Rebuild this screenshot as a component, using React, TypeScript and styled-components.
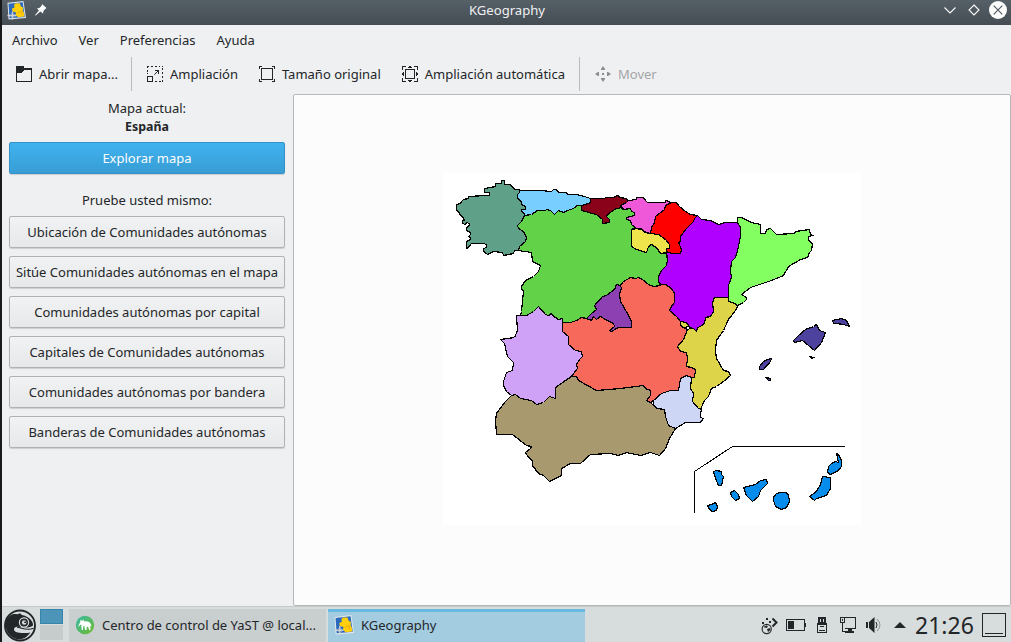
import React from "react";
import styled, { createGlobalStyle } from "styled-components";

const Global = createGlobalStyle`
  * { box-sizing: border-box; }
  body { margin: 0; background: #eff0f1; overflow: hidden; }
  #root { font-family: "Noto Sans", sans-serif; font-size: 13px; line-height: 18px; color: #232629; }
`;

const Desktop = styled.div`
  width: 1011px;
  height: 642px;
  display: flex;
  flex-direction: column;
  border-left: 2px solid #17191c;
  background: #eff0f1;
`;

const TitleBar = styled.header`
  height: 25px;
  display: grid;
  grid-template-columns: 80px 1fr 80px;
  align-items: center;
  background: linear-gradient(#566067, #454c54);
  color: #eff0f1;
`;

const TitleIcons = styled.div`
  display: flex;
  align-items: center;
  padding-left: 5px;
  gap: 9px;
  height: 25px;
  padding-bottom: 5px;
`;

const Title = styled.div`
  text-align: center;
  height: 25px;
  line-height: 21px;
  padding-left: 1px;
  font-size: 13.1px;
`;

const WindowButtons = styled.div`
  display: flex;
  justify-content: flex-end;
  gap: 6px;
  padding: 0 4px 5px 0;
  height: 25px;
  align-items: center;
`;

const MenuBar = styled.nav`
  height: 32px;
  display: flex;
  align-items: center;
  gap: 21px;
  padding: 0 0 2px 10px;
`;

const ToolBar = styled.div`
  height: 34px;
  display: flex;
  align-items: center;
  padding-left: 14px;
`;

const Tool = styled.div<{ $after: number; $disabled?: boolean }>`
  display: flex;
  align-items: center;
  gap: 7px;
  white-space: nowrap;
  margin-right: ${(p) => p.$after}px;
  color: ${(p) => (p.$disabled ? "#a3a5a7" : "#232629")};
  svg { display: block; }
`;

const Divider = styled.span<{ $after: number }>`
  width: 1px;
  height: 34px;
  background: #b9bbbd;
  margin-right: ${(p) => p.$after}px;
`;

const Body = styled.main`
  height: 515px;
  padding-top: 3px;
  display: flex;
`;

const Sidebar = styled.aside`
  width: 291px;
  padding: 5px 8px 0 7px;
  display: flex;
  flex-direction: column;
`;

const Label = styled.div<{ $bold?: boolean }>`
  text-align: center;
  height: 18px;
  line-height: ${(p) => (p.$bold ? "20px" : "18px")};
  font-weight: ${(p) => (p.$bold ? 700 : 400)};
  font-size: ${(p) => (p.$bold ? "12.4px" : "inherit")};
`;

const ButtonStack = styled.div<{ $top: number }>`
  display: flex;
  flex-direction: column;
  gap: 8px;
  margin-top: ${(p) => p.$top}px;
`;

const PushButton = styled.button<{ $primary?: boolean }>`
  height: 32px;
  padding: 0;
  border: 1px solid ${(p) => (p.$primary ? "#3391c7" : "#b0b2b4")};
  border-radius: 2px;
  background: ${(p) => (p.$primary ? "linear-gradient(#40b2f0, #389dd4)" : "linear-gradient(#f1f2f3, #e7e8e9)")};
  box-shadow: 0 1px 1px rgba(0, 0, 0, 0.14);
  color: ${(p) => (p.$primary ? "#fcfcfc" : "#232629")};
  font: inherit;
  line-height: 28px;
  white-space: nowrap;
`;

const MapFrame = styled.section`
  width: 718px;
  height: 512px;
  border: 1px solid #b6b8ba;
  border-radius: 2px;
  background: #fcfcfc;
  padding: 78px 0 0 149px;
  svg { display: block; }
`;

const Panel = styled.footer`
  height: 36px;
  border-top: 1px solid #c6cac9;
  background: #d7dcdd;
  display: flex;
  padding-top: 2px;
`;

const Launcher = styled.div`
  width: 36px;
  padding: 0 0 0 2px;
  svg { display: block; }
`;

const Pager = styled.div`
  width: 23px;
  margin: 0 6px 0 2px;
  display: flex;
  flex-direction: column;
  gap: 1px;
`;

const PagerCell = styled.span<{ $active?: boolean }>`
  height: 15px;
  background: ${(p) => (p.$active ? "#4d94b9" : "#c6cccc")};
  border: ${(p) => (p.$active ? "1px solid #3584ac" : "0")};
`;

const Task = styled.div<{ $active?: boolean }>`
  width: 257px;
  height: 33px;
  margin-right: 2px;
  padding: 0 0 1px 6px;
  display: flex;
  align-items: center;
  gap: 7px;
  white-space: nowrap;
  background: ${(p) => (p.$active ? "#a3cce1" : "#c9cecf")};
  box-shadow: inset 0 ${(p) => (p.$active ? "3px #68b9e2" : "0 transparent")};
  svg { flex: none; }
`;

const Tray = styled.div`
  margin-left: auto;
  display: flex;
  align-items: center;
  gap: 6px;
  padding-right: 5px;
  height: 32px;
`;

const Clock = styled.span`
  font-size: 23px;
  line-height: 32px;
  width: 61px;
  margin-left: -1px;
  white-space: nowrap;
`;

type Area = { fill: string; points: string };

const areas: Area[] = [
  { fill: "#5fa088", points: "456,204 460,203 461,201 463,199 468,198 468,196 485,195 489,195 489,192 484,192 484,188 490,187 495,186 495,183 501,183 501,180 504,180 504,184 509,184 512,186 514,189 519,189 519,192 517,194 517,198 521,201 521,204 525,206 525,209 521,209 521,211 524,213 524,216 521,221 517,225 518,228 523,231 525,234 526,237 525,241 519,246 518,250 514,250 513,253 508,254 503,255 502,252 493,251 487,254 483,251 483,248 486,247 486,244 483,243 471,243 468,247 466,248 466,241 470,239 470,237 468,236 470,234 470,232 466,230 466,227 469,225 469,223 466,222 465,224 462,223 462,220 464,220 462,216 460,215 458,211 456,210" },
  { fill: "#78cfff", points: "519,189 520,190 540,190 551,191 553,189 556,189 558,192 566,192 567,194 576,194 584,196 590,198 590,202 585,204 581,205 577,205 573,208 567,210 563,212 558,210 554,214 550,210 546,209 545,210 537,210 531,214 524,215 524,213 521,211 521,209 525,209 525,206 521,204 521,201 517,198 517,194 519,192" },
  { fill: "#62d249", points: "524,215 531,214 537,210 545,210 546,209 550,210 554,214 558,210 563,212 567,210 573,208 577,205 581,205 581,210 596,214 602,219 602,223 609,222 609,219 606,216 608,213 616,208 620,207 623,209 630,208 631,211 634,212 634,215 626,217 626,219 630,220 631,224 635,227 631,229 631,246 636,249 646,252 648,246 651,244 657,248 659,252 666,253 667,260 666,265 661,270 658,276 658,281 660,285 653,286 648,284 642,279 638,277 635,278 630,277 623,281 620,285 616,284 614,289 606,295 602,296 594,305 596,309 591,313 586,318 581,317 576,320 570,322 562,322 562,318 558,319 552,315 551,313 548,315 545,314 538,306 533,311 526,315 520,315 521,311 523,291 521,288 521,286 525,280 533,276 538,271 540,265 532,261 531,252 518,250 519,246 525,241 526,237 523,231 518,228 517,225 521,221" },
  { fill: "#8a0219", points: "590,198 603,198 606,197 613,197 617,195 620,197 625,198 628,200 626,202 620,205 622,207 616,208 608,213 606,216 609,219 609,222 602,223 602,219 596,214 581,210 581,205 585,204 590,202" },
  { fill: "#ef58d9", points: "628,200 636,199 636,197 643,197 645,200 647,202 665,202 665,200 669,201 669,203 665,205 664,209 659,213 655,216 654,222 651,227 650,233 644,231 640,228 636,228 631,224 630,220 626,219 626,217 634,215 634,212 631,211 630,208 623,209 620,205 626,202" },
  { fill: "#efe44b", points: "631,229 636,228 641,229 644,232 658,234 665,239 669,244 669,248 666,248 666,252 661,253 659,252 657,248 651,244 648,246 646,252 636,249 631,246" },
  { fill: "#ff0000", points: "669,203 671,202 676,202 679,206 685,211 690,214 697,215 694,218 693,221 685,229 680,236 680,241 678,242 681,249 680,253 671,253 666,251 666,248 669,248 669,244 665,239 658,234 650,233 651,227 654,222 655,216 659,213 664,209 665,205" },
  { fill: "#b000ff", points: "697,215 701,219 710,220 718,224 725,222 737,222 740,227 740,236 737,250 735,257 731,261 730,271 731,277 728,285 728,297 714,297 712,302 713,311 710,316 705,317 704,323 700,326 697,327 696,331 693,328 689,327 686,322 680,321 676,316 669,310 671,306 674,302 674,293 671,288 665,284 661,284 658,281 658,276 661,270 666,265 667,260 666,251 671,253 680,253 681,249 678,242 680,241 680,236 685,229 693,221 694,218" },
  { fill: "#83ff62", points: "737,217 741,217 751,222 760,224 760,233 765,233 766,229 770,228 776,234 794,233 795,231 809,229 810,234 812,235 808,236 808,240 812,243 811,250 809,252 807,257 800,259 788,266 783,275 771,280 750,287 741,294 746,297 746,299 743,302 737,305 735,303 728,301 728,285 731,277 730,271 731,261 735,257 737,250 740,236 740,227 737,222" },
  { fill: "#ddd449", points: "728,297 728,301 735,303 737,306 735,310 728,319 723,330 718,337 716,340 715,350 716,358 723,370 728,371 730,375 723,381 716,386 711,388 708,396 704,400 700,409 698,408 692,401 693,393 690,388 691,377 694,377 695,369 691,367 686,366 687,358 686,352 680,351 677,346 683,339 687,329 690,328 693,328 696,331 697,327 700,326 704,323 705,317 710,316 713,311 712,302 714,297" },
  { fill: "#f7695a", points: "562,322 570,322 576,320 581,317 586,318 591,320 593,316 596,319 600,316 605,319 613,323 614,326 609,330 611,331 618,327 631,327 631,321 627,313 620,301 619,293 621,288 620,285 623,281 630,277 635,278 638,277 642,279 648,284 653,286 660,285 661,284 665,284 671,288 674,293 674,302 671,306 669,310 676,316 680,321 680,325 683,327 687,329 683,339 677,346 680,351 686,352 687,358 686,366 691,367 695,369 694,377 691,377 686,375 680,378 678,390 670,390 661,393 653,400 650,402 646,400 650,395 650,390 645,388 643,385 635,386 620,388 596,390 578,380 576,376 571,376 577,368 576,364 579,359 582,356 581,351 575,350 568,344 568,336 562,331" },
  { fill: "#ddd449", points: "680,321 686,322 689,326 683,327 680,325" },
  { fill: "#8d40b2", points: "620,285 616,284 614,289 606,295 602,296 594,305 596,309 591,313 586,318 591,320 593,316 596,319 600,316 605,319 613,323 614,326 609,330 611,331 618,327 631,327 631,321 627,313 620,301 619,293 621,288" },
  { fill: "#cfa2f8", points: "562,322 562,318 558,319 552,315 551,313 548,315 545,314 538,306 533,311 526,315 516,315 517,330 514,337 500,339 504,343 507,356 513,362 512,370 506,372 503,381 503,385 506,391 511,395 515,394 520,398 531,400 536,404 543,402 549,396 555,398 555,387 565,380 571,376 577,368 576,364 579,359 582,356 581,351 575,350 568,344 568,336 562,331" },
  { fill: "#a8996e", points: "571,376 576,376 578,380 596,390 620,388 635,386 643,385 645,388 650,390 650,395 646,400 650,402 653,405 657,408 664,409 665,416 668,425 675,428 669,438 665,448 659,455 650,452 640,455 626,452 618,455 610,453 590,454 580,463 570,463 561,468 561,475 555,478 549,481 543,475 538,473 532,465 532,460 528,457 525,452 530,448 531,446 526,445 512,434 496,434 495,420 496,413 505,401 511,395 515,394 520,398 531,400 536,404 543,402 549,396 555,398 555,387 565,380" },
  { fill: "#cdd6f4", points: "653,400 661,393 670,390 678,390 680,378 686,375 691,377 690,388 693,393 692,401 698,408 701,409 700,413 700,417 703,418 700,422 685,422 675,428 668,425 665,416 664,409 657,408 653,405" },
  { fill: "#4e429f", points: "793,340 798,335 805,329 813,326 816,324 819,330 825,332 821,342 814,350 808,345 802,340 794,342" },
  { fill: "#4e429f", points: "832,320 841,318 846,320 849,326 843,324 836,323 833,323" },
  { fill: "#4e429f", points: "771,358 770,361 763,369 759,369 759,366 763,361 767,359" },
  { fill: "#4e429f", points: "765,377 770,378 770,380 768,380" },
  { fill: "#000000", points: "809,356 813,357 811,358" },
  { fill: "#068dec", points: "713,471 716,470 721,471 721,474 723,476 721,485 718,485 715,478" },
  { fill: "#068dec", points: "707,505 711,504 715,502 717,506 716,510 712,511 709,509" },
  { fill: "#068dec", points: "730,492 734,490 738,494 739,498 735,500 731,496" },
  { fill: "#068dec", points: "743,487 751,485 755,484 760,480 766,479 767,483 760,490 758,496 752,501 746,495" },
  { fill: "#068dec", points: "773,500 773,497 776,493 780,492 786,492 788,495 789,501 786,507 781,509 775,506" },
  { fill: "#068dec", points: "822,476 830,477 830,488 826,495 816,498 814,500 809,496 816,491 820,484" },
  { fill: "#068dec", points: "827,472 828,466 831,463 835,461 838,462 836,453 838,454 841,460 841,466 838,470 830,474" },
];

const SpainMap = () => (
  <svg width="418" height="352" viewBox="443 173 418 352" shapeRendering="crispEdges">
    <rect x="443" y="173" width="418" height="352" fill="#fff" />
    <g transform="translate(.5 .5)" stroke="#000" strokeWidth="1.2">
      {areas.map((a, i) => (
        <polygon key={i} points={a.points} fill={a.fill} />
      ))}
      <path d="M694 512V471L732 446H844.5" fill="none" strokeWidth="1" />
    </g>
  </svg>
);

const AppIcon = ({ size }: { size: number }) => (
  <svg width={size} height={size} viewBox="0 0 19 19">
    <path d="M.5 1.8 16.5 0 19 17 1.5 18.5Z" fill="#dfe6ea" />
    <path d="M1.5 2.8 15.7 1.2 17.8 16 2.5 17.3Z" fill="#2a69bd" />
    <path d="M7 4 8.5 2.3 12.8 2.3 14 5.6 16 6.5 15.8 9.5 17 12 17.4 15.6 11 16.3 8.5 14 9 11.5 5.5 10.5 5 7.5 7.5 6.5Z" fill="#ffce0c" />
    <path d="M10.5 12 14.5 10 15 13.5" fill="none" stroke="#e5a50a" strokeWidth=".8" />
    <path d="M5.5 10.500v8M.5 14.500h8.500" stroke="#d5d9dc" strokeWidth="1.300" />
    <circle cx="5.500" cy="14.500" r="1.900" fill="none" stroke="#a3adb3" strokeWidth=".8" />
  </svg>
);

const Pin = () => (
  <svg width="12" height="12" viewBox="0 0 12 12" fill="#fcfcfc">
    <path d="M7 0 11.5 4 10.3 5 8.6 6.8 8 9.5 5.4 7.5 1 11.3 0 11.8.5 10.6 4 6.4 2 4.4 4.7 3.7 6.6 1.8Z" />
  </svg>
);

const OpenIcon = () => (
  <svg width="16" height="16" viewBox="0 0 16 16" shapeRendering="crispEdges">
    <path d="M0 0h8v2h8v14H0zM1 7v8h14V4H8L5 7z" fill="#232629" fillRule="evenodd" />
  </svg>
);

const ZoomIcon = () => (
  <svg width="16" height="16" viewBox="0 0 16 16" fill="none" stroke="#232629">
    <g shapeRendering="crispEdges">
      <path d="M0 .5h2M4 .5h2M8 .5h2M12 .5h1M15 .5h1M.5 0v2M.5 4v2M.5 7v1M15.5 2v2M15.5 6v2M15.5 10v2M15.5 14v2M8 15.5h2M12 15.5h2" />
      <path d="M.5 10.5h5v5h-5zM8 4.5h3.5V8" />
    </g>
    <path d="M7.300 8.700l4-4" />
  </svg>
);

const SizeIcon = ({ arrows }: { arrows?: boolean }) => (
  <svg width="16" height="16" viewBox="0 0 16 16" fill="none" stroke="#232629" shapeRendering="crispEdges">
    {arrows ? (
      <>
        <path d="M3.5 3.5h9v9h-9zM.5 4V.5H4M12 .5h3.5V4M.5 12v3.5H4M12 15.5h3.5V12" />
        <path d="M7 .5h2M6 1.5h4M7 15.5h2M6 14.5h4M.5 7v2M1.5 6v4M15.5 7v2M14.5 6v4" />
      </>
    ) : (
      <path d="M2.5 2.5h11v11h-11zM.5 3V.5H3M13 .5h2.5V3M.5 13v2.5H3M13 15.5h2.5V13" />
    )}
  </svg>
);

const MoveIcon = () => (
  <svg width="16" height="16" viewBox="0 0 16 16" fill="#8b8d8f">
    <path d="M8 0l2 3v1H6V3zM8 16l2-3v-1H6v1zM0 8l3-2h1v4H3zM16 8l-3-2h-1v4h1zM7 7h2v2H7z" />
  </svg>
);

const Gecko = () => (
  <svg width="32" height="33" viewBox="0 0 32 33">
    <circle cx="16" cy="16.5" r="15" fill="none" stroke="#232629" strokeWidth="1.9" />
    <path d="M1.5 13C2.500 9.500 5 7 8 5.500c2-.8 4-.5 5.500-.3L16 4.200l2 1.700c4 .8 8 3 10 6.500.8 1.500 1.300 3 .8 4.300-2 1.500-5 2-9 1.700-4-.5-8-1.200-9.500.8-1 2.300 1 3.700 3.500 4.200 4.500.8 9.500 1 12.500-.2-3 5-7 7.300-12 7C7 30 1 23 1.500 13Z" fill="#232629" />
    <path d="M13 18.200c5 .5 9.500 4 16.500 1" fill="none" stroke="#232629" strokeWidth="1.200" />
    <circle cx="20" cy="13.500" r="4.600" fill="none" stroke="#d7dcdd" strokeWidth="1.200" />
    <circle cx="20.200" cy="13.500" r="2.300" fill="#d7dcdd" />
    <rect x="20" y="12.500" width="2.400" height="1.600" rx=".8" fill="#232629" />
  </svg>
);

const Yast = () => (
  <svg width="20" height="20" viewBox="0 0 20 20">
    <defs>
      <linearGradient id="yast" x2="1" y2="1">
        <stop stopColor="#35b9a5" />
        <stop offset="1" stopColor="#72bb2d" />
      </linearGradient>
    </defs>
    <circle cx="10" cy="10" r="9.2" fill="url(#yast)" />
    <path d="M3.5 10.500 5.200 7.300 5.500 4.500 7 6 8.500 4.500 9 6.500c2.500-.7 5-.3 6.500 2l1.300 3-1.600-1 .3 4.500h-1.400l-.8-3-1.500-.2-.3 3.200h-1.400L9.500 11.500 8.300 11 8 15H6.700L6.300 10 5 9.700 3.800 12Z" fill="#fff" />
  </svg>
);

const games = [
  "Ubicación de Comunidades autónomas",
  "Sitúe Comunidades autónomas en el mapa",
  "Comunidades autónomas por capital",
  "Capitales de Comunidades autónomas",
  "Comunidades autónomas por bandera",
  "Banderas de Comunidades autónomas",
];

export default function App() {
  return (
    <>
      <Global />
      <Desktop>
        <TitleBar>
          <TitleIcons>
            <AppIcon size={19} />
            <Pin />
          </TitleIcons>
          <Title>KGeography</Title>
          <WindowButtons>
            <svg width="18" height="18" viewBox="0 0 18 18" fill="none" stroke="#fcfcfc" strokeWidth="1.1">
              <path d="M3.5 6.5 9 12l5.5-5.5" />
            </svg>
            <svg width="18" height="18" viewBox="0 0 18 18" fill="none" stroke="#fcfcfc" strokeWidth="1.1">
              <path d="M9 4l5 5-5 5-5-5z" />
            </svg>
            <svg width="18" height="18" viewBox="0 0 18 18">
              <circle cx="9" cy="9" r="9" fill="#fcfcfc" />
              <path d="M4.7 4.7l8.6 8.6M13.3 4.7l-8.6 8.6" stroke="#4b545b" strokeWidth="1.1" />
            </svg>
          </WindowButtons>
        </TitleBar>
        <MenuBar>
          <span>Archivo</span>
          <span>Ver</span>
          <span>Preferencias</span>
          <span>Ayuda</span>
        </MenuBar>
        <ToolBar>
          <Tool $after={13}><OpenIcon />Abrir mapa...</Tool>
          <Divider $after={15} />
          <Tool $after={21}><ZoomIcon />Ampliación</Tool>
          <Tool $after={21}><SizeIcon />Tamaño original</Tool>
          <Tool $after={14}><SizeIcon arrows />Ampliación automática</Tool>
          <Divider $after={15} />
          <Tool $after={0} $disabled><MoveIcon />Mover</Tool>
        </ToolBar>
        <Body>
          <Sidebar>
            <Label>Mapa actual:</Label>
            <Label $bold>España</Label>
            <ButtonStack $top={7}>
              <PushButton $primary>Explorar mapa</PushButton>
            </ButtonStack>
            <ButtonStack $top={17}>
              <Label>Pruebe usted mismo:</Label>
            </ButtonStack>
            <ButtonStack $top={7}>
              {games.map((g) => (
                <PushButton key={g}>{g}</PushButton>
              ))}
            </ButtonStack>
          </Sidebar>
          <MapFrame>
            <SpainMap />
          </MapFrame>
        </Body>
        <Panel>
          <Launcher><Gecko /></Launcher>
          <Pager>
            <PagerCell $active />
            <PagerCell />
          </Pager>
          <Task><Yast />Centro de control de YaST @ local...</Task>
          <Task $active><AppIcon size={20} />KGeography</Task>
          <Tray>
            <svg width="20" height="20" viewBox="0 0 20 20" fill="#232629">
              <circle cx="6.7" cy="14" r="4.6" fill="none" stroke="#232629" strokeWidth="1.1" />
              <path d="M3 12l3.500-1.500 1.500 1-1.500 1.500zM7 14l3-1 .5 2-2.500 2zM2 7h2v2H2zM6 3h2v2H6zM9 6h2v2H9z" />
              <path d="M12.500 3.500l4 4-4 4" fill="none" stroke="#232629" strokeWidth="2" />
            </svg>
            <svg width="20" height="20" viewBox="0 0 20 20" shapeRendering="crispEdges">
              <path d="M.5 4.5h18v11H.5z" fill="none" stroke="#232629" />
              <path d="M2 6h6v8H2zM19 8h1v4h-1z" fill="#232629" />
            </svg>
            <svg width="20" height="20" viewBox="0 0 20 20" shapeRendering="crispEdges">
              <path d="M6 2h8v6h1v10H5V8h1zM8 4v3h1V4zM11 4v3h1V4zM6 10v7h8v-7z" fill="#232629" fillRule="evenodd" />
              <path d="M7 15.5h6M8 11.5h4" stroke="#232629" />
            </svg>
            <svg width="20" height="20" viewBox="0 0 20 20" fill="none" stroke="#232629" shapeRendering="crispEdges">
              <path d="M7 2.5h10.5v11H6.5M2.5 2.5h4v5h-4zM4.5 8v8H7M4 4v2" />
              <path d="M7 16.5h9M10 14.5h4" strokeWidth="2" />
            </svg>
            <svg width="20" height="20" viewBox="0 0 20 20" fill="#232629">
              <path d="M2 7h2v6H2zM5 7l5.5-5v16L5 13z" />
              <path d="M12 7q2 3 0 6" fill="none" stroke="#232629" />
              <path d="M13 4q6 6 0 12" fill="none" stroke="#8d9495" />
            </svg>
            <svg width="20" height="20" viewBox="0 0 20 20">
              <path d="M4 13l6-6 6 6z" fill="#232629" />
            </svg>
            <Clock>21:26</Clock>
            <svg width="24" height="24" viewBox="0 0 24 24" fill="none" stroke="#232629" shapeRendering="crispEdges">
              <path d="M.5.5h23v23H.5zM3 20.5h18" />
            </svg>
          </Tray>
        </Panel>
      </Desktop>
    </>
  );
}
